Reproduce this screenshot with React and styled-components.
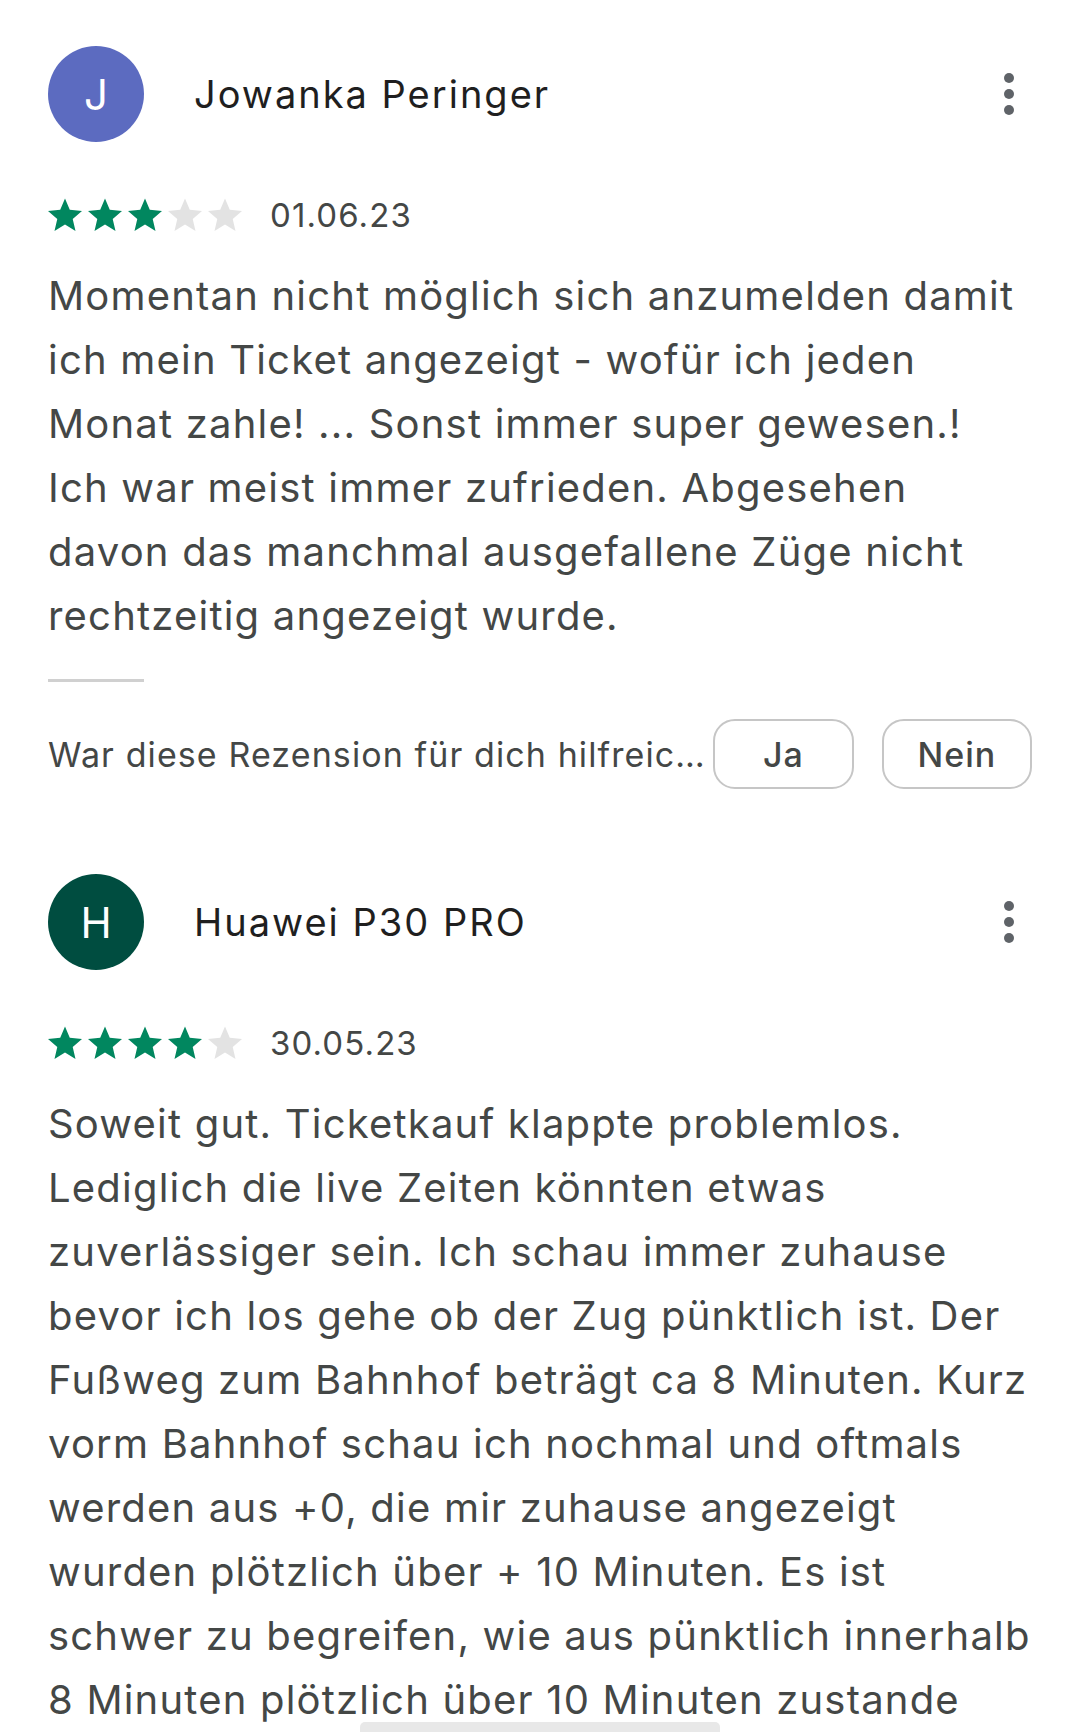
import styled, { createGlobalStyle } from 'styled-components';

const GlobalStyle = createGlobalStyle`
  html, body {
    margin: 0;
    padding: 0;
    background: #fff;
  }
  body {
    font-family: Inter, Roboto, "Liberation Sans", sans-serif;
    -webkit-font-smoothing: antialiased;
  }
`;

// layout
const Page = styled.main`
  position: relative;
  height: 1732px;
  overflow: hidden;
  box-sizing: border-box;
  padding: 46px 44px 0 48px;
`;

const Review = styled.article`
  display: flex;
  flex-direction: column;
  & + & {
    margin-top: 85px;
  }
`;

const Header = styled.div`
  display: flex;
  align-items: center;
  height: 96px;
`;

const Avatar = styled.div`
  width: 96px;
  height: 96px;
  border-radius: 50%;
  flex-shrink: 0;
  background-color: ${(props) => props.$bg};
  color: #fff;
  font-size: 42px;
  display: flex;
  align-items: center;
  justify-content: center;
`;

const Name = styled.div`
  flex: 1;
  margin-left: 50px;
  font-size: 38px;
  color: #1f1f1f;
  letter-spacing: 2px;
`;

const MoreButton = styled.button`
  border: 0;
  background: none;
  padding: 0;
  margin-right: 21px;
  display: flex;
  cursor: pointer;
`;

const RatingRow = styled.div`
  display: flex;
  align-items: center;
  margin-top: 56px;
  height: 34px;
`;

const Stars = styled.div`
  display: flex;
  gap: 6px;
`;

const DateText = styled.span`
  margin-left: 28px;
  font-size: 33px;
  color: #444746;
  letter-spacing: 1.1px;
`;

const Body = styled.p`
  margin: 32px 0 0;
  font-size: 40px;
  line-height: 64px;
  color: #444746;
  white-space: nowrap;
  letter-spacing: 1.2px;
`;

const Divider = styled.div`
  width: 96px;
  height: 3px;
  background: #d0d0d0;
  margin-top: 31px;
`;

const HelpfulRow = styled.div`
  display: flex;
  align-items: center;
  margin-top: 37px;
  height: 70px;
`;

const HelpText = styled.span`
  font-size: 34px;
  color: #444746;
  white-space: nowrap;
  margin-right: 7px;
  letter-spacing: 1.1px;
`;

const VoteButton = styled.button`
  box-sizing: border-box;
  height: 70px;
  width: ${(props) => props.$w}px;
  margin-left: ${(props) => props.$gap}px;
  border: 2px solid #c6c6c6;
  border-radius: 22px;
  background: #fff;
  font-family: inherit;
  font-size: 34px;
  font-weight: 500;
  color: #444746;
  letter-spacing: 1px;
`;

const GestureBar = styled.div`
  position: absolute;
  left: 360px;
  bottom: 0;
  width: 360px;
  height: 10px;
  border-radius: 5px 5px 0 0;
  background: #e8e8e8;
`;

const Star = ({ filled }) => (
  <svg width="34" height="34" viewBox="2 2 20 19.3">
    <path
      d="M12 17.27L18.18 21l-1.64-7.03L22 9.24l-7.19-.61L12 2 9.19 8.63 2 9.24l5.46 4.73L5.82 21z"
      fill={filled ? '#01875f' : '#e3e3e3'}
    />
  </svg>
);

const Dots = () => (
  <svg width="10" height="42" viewBox="0 0 10 42">
    <circle cx="5" cy="5" r="5" fill="#5f6368" />
    <circle cx="5" cy="21" r="5" fill="#5f6368" />
    <circle cx="5" cy="37" r="5" fill="#5f6368" />
  </svg>
);

const reviews = [
  {
    initial: 'J',
    color: '#5c6bc0',
    name: 'Jowanka Peringer',
    rating: 3,
    date: '01.06.23',
    lines: [
      'Momentan nicht möglich sich anzumelden damit',
      'ich mein Ticket angezeigt - wofür ich jeden',
      'Monat zahle! ... Sonst immer super gewesen.!',
      'Ich war meist immer zufrieden. Abgesehen',
      'davon das manchmal ausgefallene Züge nicht',
      'rechtzeitig angezeigt wurde.',
    ],
    helpful: true,
  },
  {
    initial: 'H',
    color: '#004d40',
    name: 'Huawei P30 PRO',
    rating: 4,
    date: '30.05.23',
    lines: [
      'Soweit gut. Ticketkauf klappte problemlos.',
      'Lediglich die live Zeiten könnten etwas',
      'zuverlässiger sein. Ich schau immer zuhause',
      'bevor ich los gehe ob der Zug pünktlich ist. Der',
      'Fußweg zum Bahnhof beträgt ca 8 Minuten. Kurz',
      'vorm Bahnhof schau ich nochmal und oftmals',
      'werden aus +0, die mir zuhause angezeigt',
      'wurden plötzlich über + 10 Minuten. Es ist',
      'schwer zu begreifen, wie aus pünktlich innerhalb',
      '8 Minuten plötzlich über 10 Minuten zustande',
    ],
    helpful: false,
  },
];

export default function App() {
  return (
    <Page>
      <GlobalStyle />
      {reviews.map((r) => (
        <Review key={r.name}>
          <Header>
            <Avatar $bg={r.color}>{r.initial}</Avatar>
            <Name>{r.name}</Name>
            <MoreButton aria-label="Mehr">
              <Dots />
            </MoreButton>
          </Header>
          <RatingRow>
            <Stars>
              {[1, 2, 3, 4, 5].map((n) => (
                <Star key={n} filled={n <= r.rating} />
              ))}
            </Stars>
            <DateText>{r.date}</DateText>
          </RatingRow>
          <Body>
            {r.lines.map((line, i) => (
              <span key={i}>
                {line}
                {i < r.lines.length - 1 && <br />}
              </span>
            ))}
          </Body>
          {r.helpful && (
            <>
              <Divider />
              <HelpfulRow>
                <HelpText>War diese Rezension für dich hilfreic…</HelpText>
                <VoteButton $w={141} $gap={0}>Ja</VoteButton>
                <VoteButton $w={150} $gap={28}>Nein</VoteButton>
              </HelpfulRow>
            </>
          )}
        </Review>
      ))}
      <GestureBar />
    </Page>
  );
}
